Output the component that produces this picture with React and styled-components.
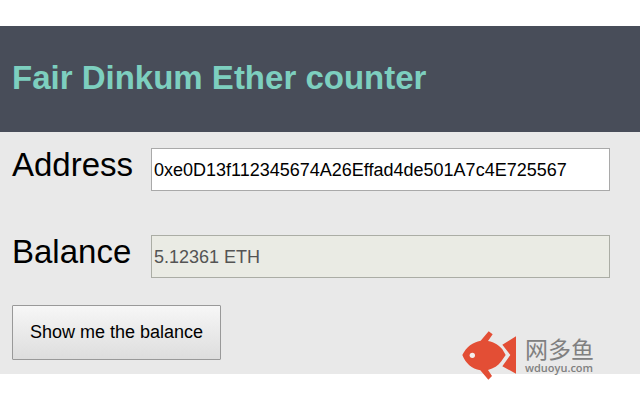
import { useState } from "react";
import styled, { createGlobalStyle } from "styled-components";

export default function App(){
    const [address, setAddress] = useState("0xe0D13f112345674A26Effad4de501A7c4E725567");

    return(
        <>
            <GlobalStyle/>
            <Screen>
                <Page>
                    <Header>
                        <Title>Fair Dinkum Ether counter</Title>
                    </Header>
                    <Form onSubmit={(e) => e.preventDefault()}>
                        <Field>
                            <Label htmlFor="address">Address</Label>
                            <Input
                                id="address"
                                type="text"
                                spellCheck={false}
                                value={address}
                                onChange={(e) => setAddress(e.target.value)}
                            />
                        </Field>
                        <Field>
                            <Label htmlFor="balance">Balance</Label>
                            <Input id="balance" type="text" value="5.12361 ETH" disabled/>
                        </Field>
                        <Button type="submit">Show me the balance</Button>
                    </Form>
                    <Watermark>
                        <Fish/>
                        <Brand>
                            <BrandName>网多鱼</BrandName>
                            <BrandSite>wduoyu.com</BrandSite>
                        </Brand>
                    </Watermark>
                </Page>
            </Screen>
        </>
    )
}

function Fish(){
    return(
        <svg width="55" height="49" viewBox="21 33 165 147" aria-hidden="true">
            <g fill="#e34e35">
                <path d="M22 105 C34 80 54 66 77 62 L101 34 L113 43 L99 63 C119 67 134 77 142 88 L152 105 L139 124 C130 137 116 146 99 150 L111 168 L100 179 L76 151 C50 146 32 130 22 105 Z"/>
                <path d="M183 49 V161 L142 139 L166 105 L142 74 Z"/>
            </g>
            <circle cx="52" cy="106" r="8" fill="#f4eeec"/>
        </svg>
    )
}

const GlobalStyle = createGlobalStyle`
* {
    box-sizing: border-box;
}
body {
    margin: 0;
    background-color: #FFFFFF;
    font-family: "Liberation Sans", Arial, sans-serif;
}
`
const Screen = styled.div`
min-height: 100vh;
padding: 26px 0;
`
const Page = styled.main`
position: relative;
background-color: #E9E9E9;
`
const Header = styled.header`
background-color: #484D59;
padding: 32px 12px 34px;
`
const Title = styled.h1`
margin: 0;
color: #7DCFBF;
font-size: 33px;
font-weight: 700;
line-height: 40px;
`
const Form = styled.form`
display: flex;
flex-direction: column;
align-items: flex-start;
padding: 16px 30px 14px 12px;
`
const Field = styled.div`
width: 100%;
display: grid;
grid-template-columns: 139px 1fr;
align-items: start;
margin-bottom: 44px;

&:nth-of-type(2) {
    margin-bottom: 27px;
}
`
const Label = styled.label`
color: #000000;
font-size: 33px;
line-height: 34px;
`
const Input = styled.input`
width: 100%;
height: 43px;
padding: 2px 2px 0;
border: 1px solid #A9A9A9;
border-radius: 0;
background-color: #FFFFFF;
color: #000000;
font-family: inherit;
font-size: 18px;

&:disabled {
    background-color: #EAEBE4;
    border-color: #ABADA5;
    color: #545454;
}
`
const Button = styled.button`
padding: 0 17px;
height: 55px;
border: 1px solid #999999;
border-radius: 1px;
background: linear-gradient(#F7F7F7, #DDDDDD);
color: #000000;
font-family: inherit;
font-size: 18px;
`
const Watermark = styled.div`
position: absolute;
right: 46px;
bottom: -6px;
display: flex;
align-items: center;
gap: 8px;
`
const Brand = styled.div`
display: flex;
flex-direction: column;
color: #808080;
`
const BrandName = styled.span`
font-family: "Noto Sans CJK SC", sans-serif;
font-size: 23px;
font-weight: 400;
line-height: 25px;
`
const BrandSite = styled.span`
font-family: "Open Sans", "Noto Sans", sans-serif;
font-size: 11px;
font-weight: 600;
line-height: 14px;
`
